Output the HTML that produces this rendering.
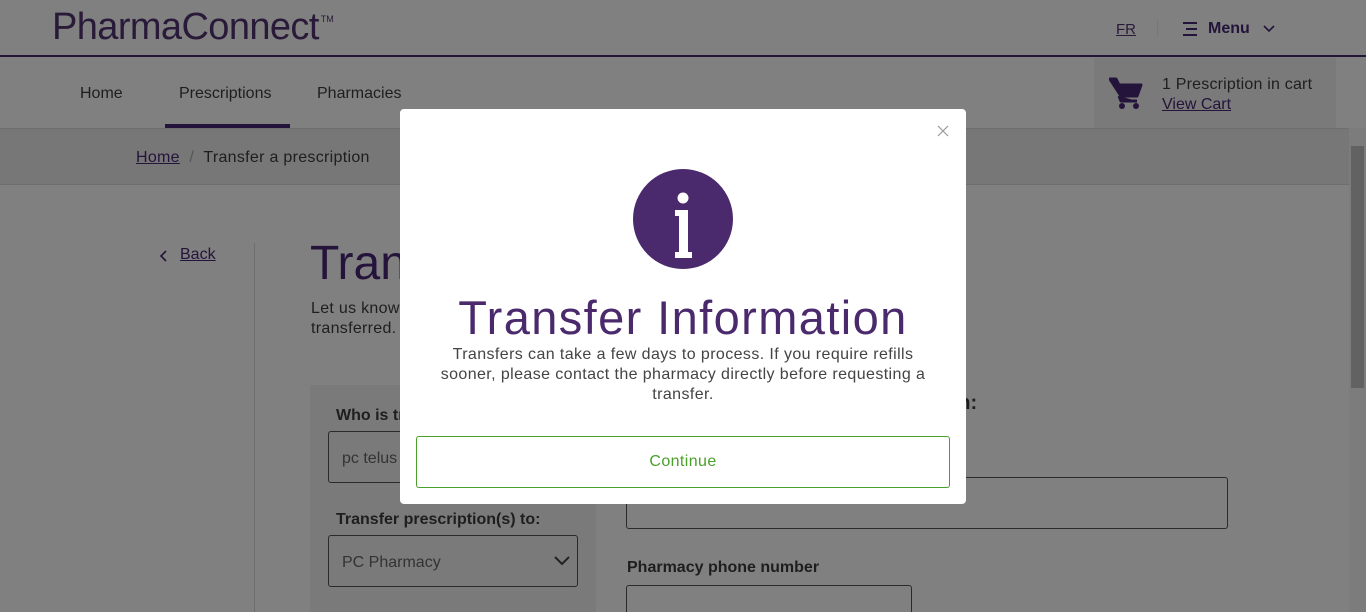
<!DOCTYPE html>
<html><head><style>
*{box-sizing:border-box;margin:0;padding:0}
html,body{width:1366px;height:612px;overflow:hidden}
body{background:#808080;font-family:"Liberation Sans",sans-serif;position:relative;color:#1e1e1e}
.a{position:absolute}
.logo{left:52px;top:6px;font-size:38px;color:#2a1a3a;letter-spacing:-0.6px;font-weight:normal}
.logo sup{font-size:9px;letter-spacing:0;vertical-align:top;position:relative;top:8px;left:2px}
.hl{left:0;top:55px;width:1366px;height:2px;background:#24133a}
.nav{top:85px;font-size:16px;color:#1e1e1e}
.u{text-decoration:underline}
.box{border:1px solid #2a2a2a;border-radius:3px}
</style></head><body>
<div class="a logo">PharmaConnect<sup>TM</sup></div>
<div class="a u" style="left:1116px;top:21px;font-size:15px;color:#2a1a3a">FR</div>
<div class="a" style="left:1157px;top:20px;width:1px;height:16px;background:#777"></div>
<svg class="a" style="left:1182px;top:21px" width="16" height="16"><path d="M1 2h14M4 8h11M1 14h14" stroke="#24133a" stroke-width="2"/></svg>
<div class="a" style="left:1208px;top:20px;font-size:16px;font-weight:bold;color:#24133a">Menu</div>
<svg class="a" style="left:1263px;top:24px" width="12" height="10"><path d="M1 2l5 5 5-5" stroke="#24133a" stroke-width="1.6" fill="none"/></svg>
<div class="a hl"></div>
<div class="a nav" style="left:80px">Home</div>
<div class="a nav" style="left:179px">Prescriptions</div>
<div class="a" style="left:165px;top:124px;width:125px;height:4px;background:#24133a"></div>
<div class="a nav" style="left:317px">Pharmacies</div>
<div class="a" style="left:1094px;top:58px;width:242px;height:70px;background:#7a7a7a"></div>
<svg class="a" style="left:1109px;top:76px" width="36" height="34"><path d="M1 3h6l3 6h22l-4 11H12zM10 20l2 5h16" stroke="#24133a" stroke-width="3" fill="#24133a" stroke-linejoin="round"/><circle cx="13" cy="30" r="3" fill="#24133a"/><circle cx="27" cy="30" r="3" fill="#24133a"/></svg>
<div class="a" style="left:1162px;top:76px;font-size:16px;color:#1e1e1e;letter-spacing:0.2px">1 Prescription in cart</div>
<div class="a u" style="left:1162px;top:96px;font-size:16px;color:#24133a">View Cart</div>
<div class="a" style="left:0;top:128px;width:1349px;height:57px;background:#777;border-top:1px solid #6e6e6e;border-bottom:1px solid #6e6e6e"></div>
<div class="a" style="left:136px;top:149px;font-size:16px;letter-spacing:0.3px"><span class="u" style="color:#24133a">Home</span> <span style="color:#555">&nbsp;/&nbsp;</span> Transfer a prescription</div>
<div class="a" style="left:1349px;top:128px;width:17px;height:484px;background:#7c7c7c"></div>
<div class="a" style="left:1351px;top:146px;width:13px;height:242px;background:#626262"></div>
<svg class="a" style="left:159px;top:250px" width="10" height="12"><path d="M7 1L2 6l5 5" stroke="#24133a" stroke-width="1.6" fill="none"/></svg>
<div class="a u" style="left:180px;top:246px;font-size:16px;color:#24133a">Back</div>
<div class="a" style="left:254px;top:243px;width:1px;height:369px;background:#6e6e6e"></div>
<div class="a" style="left:310px;top:236px;font-size:48px;color:#24133a">Transfer a prescription</div>
<div class="a" style="left:311px;top:299px;font-size:16px;line-height:20px;width:840px;letter-spacing:0.3px">Let us know which pharmacy you'd like to transfer from, and which prescriptions to be<br>transferred.</div>
<div class="a" style="left:310px;top:385px;width:286px;height:227px;background:#7a7a7a"></div>
<div class="a" style="left:336px;top:407px;font-size:16px;font-weight:bold">Who is transferring?</div>
<div class="a box" style="left:328px;top:431px;width:250px;height:52px"></div>
<div class="a" style="left:342px;top:450px;font-size:16px;color:#333">pc telus</div>
<div class="a" style="left:336px;top:511px;font-size:16px;font-weight:bold">Transfer prescription(s) to:</div>
<div class="a box" style="left:328px;top:535px;width:250px;height:52px"></div>
<div class="a" style="left:342px;top:554px;font-size:16px;color:#333">PC Pharmacy</div>
<svg class="a" style="left:554px;top:556px" width="16" height="10"><path d="M1 1l7 7 7-7" stroke="#222" stroke-width="2" fill="none"/></svg>
<div class="a" style="left:626px;top:392px;font-size:20px;font-weight:bold;color:#1e1e1e">Transfer from pharmacy information:</div>
<div class="a box" style="left:626px;top:477px;width:602px;height:52px"></div>
<div class="a" style="left:627px;top:559px;font-size:16px;font-weight:bold">Pharmacy phone number</div>
<div class="a box" style="left:626px;top:585px;width:286px;height:40px"></div>

<div class="a" style="left:400px;top:109px;width:566px;height:395px;background:#fff;border-radius:4px;text-align:center">
<svg class="a" style="left:537px;top:16px" width="12" height="12"><path d="M1 1l10 10M11 1L1 11" stroke="#999" stroke-width="1.2"/></svg>
<svg class="a" style="left:233px;top:60px" width="100" height="100"><circle cx="50" cy="50" r="50" fill="#4a2a6c"/><circle cx="50" cy="29" r="5.5" fill="#fff"/><path d="M42 41h13v42h4v6H42v-6h4V47h-4z" fill="#fff"/></svg>
<div class="a" style="left:0;width:566px;top:181px;font-size:47px;color:#4a2a6c;letter-spacing:1.4px">Transfer Information</div>
<div class="a" style="left:24px;width:518px;top:236px;font-size:16px;line-height:20px;color:#444;letter-spacing:0.4px">Transfers can take a few days to process. If you require refills sooner, please contact the pharmacy directly before requesting a transfer.</div>
<div class="a" style="left:16px;top:327px;width:534px;height:52px;border:1px solid #4aa02a;border-radius:3px;line-height:50px;font-size:16px;color:#4aa02a;letter-spacing:0.4px">Continue</div>
</div>
</body></html>
